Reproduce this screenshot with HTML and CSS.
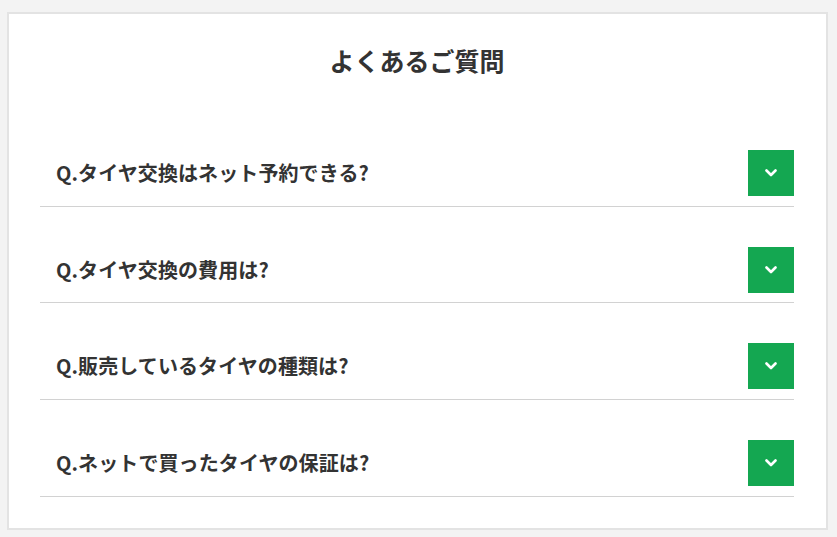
FILE: index.html
```html
<!DOCTYPE html>
<html lang="ja"><head>
<meta charset="utf-8">
<title>よくあるご質問</title>
<link rel="stylesheet" href="styles.css">
</head><body>
<section class="faq">
<h2 class="faq-title">よくあるご質問</h2>
<ul class="faq-list">
<li class="faq-item">
<span class="faq-q">Q.タイヤ交換はネット予約できる?</span>
<button class="faq-toggle" type="button"><svg width="12" height="8" viewBox="0 0 12 8"><path d="M1.5 1.5 L6 6 L10.5 1.5" fill="none" stroke="#fff" stroke-width="2.6" stroke-linecap="round" stroke-linejoin="round"/></svg></button>
</li>
<li class="faq-item">
<span class="faq-q">Q.タイヤ交換の費用は?</span>
<button class="faq-toggle" type="button"><svg width="12" height="8" viewBox="0 0 12 8"><path d="M1.5 1.5 L6 6 L10.5 1.5" fill="none" stroke="#fff" stroke-width="2.6" stroke-linecap="round" stroke-linejoin="round"/></svg></button>
</li>
<li class="faq-item">
<span class="faq-q">Q.販売しているタイヤの種類は?</span>
<button class="faq-toggle" type="button"><svg width="12" height="8" viewBox="0 0 12 8"><path d="M1.5 1.5 L6 6 L10.5 1.5" fill="none" stroke="#fff" stroke-width="2.6" stroke-linecap="round" stroke-linejoin="round"/></svg></button>
</li>
<li class="faq-item">
<span class="faq-q">Q.ネットで買ったタイヤの保証は?</span>
<button class="faq-toggle" type="button"><svg width="12" height="8" viewBox="0 0 12 8"><path d="M1.5 1.5 L6 6 L10.5 1.5" fill="none" stroke="#fff" stroke-width="2.6" stroke-linecap="round" stroke-linejoin="round"/></svg></button>
</li>
</ul>
</section>
</body></html>
```

FILE: styles.css
```css
html {
	background: #f3f3f3;
}

body {
	margin: 0;
	padding: 12px 9px 8px 7px;
	font-family: "Noto Sans CJK JP", "Noto Sans", sans-serif;
	color: #333;
}

.faq {
	background: #fff;
	border: 2px solid #e3e3e3;
	padding: 27px 32px 31px 31px;
}

.faq-title {
	margin: 0;
	text-align: center;
	font-size: 25px;
	line-height: 38px;
	font-weight: bold;
	color: #333;
}

.faq-list {
	list-style: none;
	margin: 31px 0 0;
	padding: 0;
}

.faq-item {
	display: flex;
	align-items: center;
	justify-content: space-between;
	padding: 40px 0 9.67px 16px;
	border-bottom: 1px solid #d2d2d2;
}

.faq-q {
	font-size: 20px;
	font-weight: bold;
	line-height: 30px;
	letter-spacing: 0.1px;
	color: #333;
}

.faq-toggle {
	display: flex;
	align-items: center;
	justify-content: center;
	width: 46px;
	height: 46px;
	padding: 0;
	border: 0;
	background: #14a751;
	cursor: pointer;
}
```
